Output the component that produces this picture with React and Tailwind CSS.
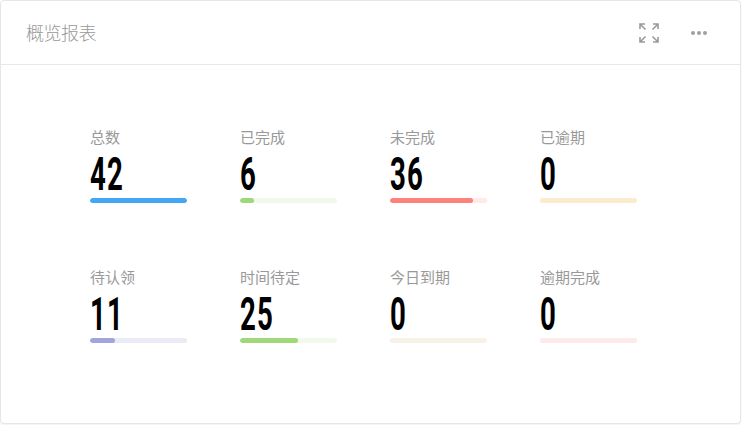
import React from "react";

const stats = [
  { label: "总数", value: 42, fill: "bg-[#42a7f4]", track: "bg-[#e3f1fd]" },
  { label: "已完成", value: 6, fill: "bg-[#9ed879]", track: "bg-[#f0f9ea]" },
  { label: "未完成", value: 36, fill: "bg-[#fd837a]", track: "bg-[#ffe9e9]" },
  { label: "已逾期", value: 0, fill: "bg-[#fcc96a]", track: "bg-[#fdebcd]" },
  { label: "待认领", value: 11, fill: "bg-[#a3a4d9]", track: "bg-[#ebebf5]" },
  { label: "时间待定", value: 25, fill: "bg-[#9ed879]", track: "bg-[#f0f9ea]" },
  { label: "今日到期", value: 0, fill: "bg-[#f3c98a]", track: "bg-[#f8f1e5]" },
  { label: "逾期完成", value: 0, fill: "bg-[#fd837a]", track: "bg-[#fdeaea]" },
];

function ExpandIcon() {
  return (
    <svg width="22" height="22" viewBox="0 0 22 22" fill="none" stroke="#9a9a9a" strokeWidth="1.6">
      <path d="M2 7V2h5M2 2l5.5 5.5" />
      <path d="M15 2h5v5M20 2l-5.5 5.5" />
      <path d="M2 15v5h5M2 20l5.5-5.5" />
      <path d="M20 15v5h-5M20 20l-5.5-5.5" />
    </svg>
  );
}

function Stat({ s }) {
  const pct = (s.value / 42) * 100;
  return (
    <div className="flex flex-col w-[97px]">
      <div className="text-[15px] leading-[20px] text-[#999999] whitespace-nowrap">{s.label}</div>
      <div className="mt-[4px] h-[45px] leading-none text-[46px] font-bold text-black font-['Roboto',sans-serif]">
        <span className="inline-block origin-left scale-x-[0.6] tracking-[2px]">{s.value}</span>
      </div>
      <div className={`mt-[2px] h-[5px] w-[97px] rounded-full overflow-hidden ${s.track}`}>
        <div className={`h-full rounded-full ${s.fill}`} style={{ width: `${pct}%` }} />
      </div>
    </div>
  );
}

export default function App() {
  return (
    <div className="w-[742px] h-[425px] bg-white font-['Noto_Sans_CJK_SC','Noto_Sans',sans-serif]">
      <div className="w-[741px] h-[424px] border border-[#e6e6e6] rounded-[4px] bg-white shadow-[0_1px_2px_rgba(0,0,0,0.06)] flex flex-col">
        <div className="h-[64px] border-b border-[#e8e8e8] flex items-center justify-between pl-[25px] pr-[32px]">
          <div className="text-[18px] font-light text-[#999999] tracking-[-0.5px]">概览报表</div>
          <div className="flex items-center gap-[30px]">
            <ExpandIcon />
            <svg width="18" height="6" viewBox="0 0 18 6" fill="#a0a0a0">
              <circle cx="3" cy="3" r="2" />
              <circle cx="9" cy="3" r="2" />
              <circle cx="15" cy="3" r="2" />
            </svg>
          </div>
        </div>
        <div className="pt-[62px] pl-[89px] grid grid-cols-[repeat(4,150px)] gap-y-[64px]">
          {stats.map((s) => (
            <Stat key={s.label} s={s} />
          ))}
        </div>
      </div>
    </div>
  );
}
